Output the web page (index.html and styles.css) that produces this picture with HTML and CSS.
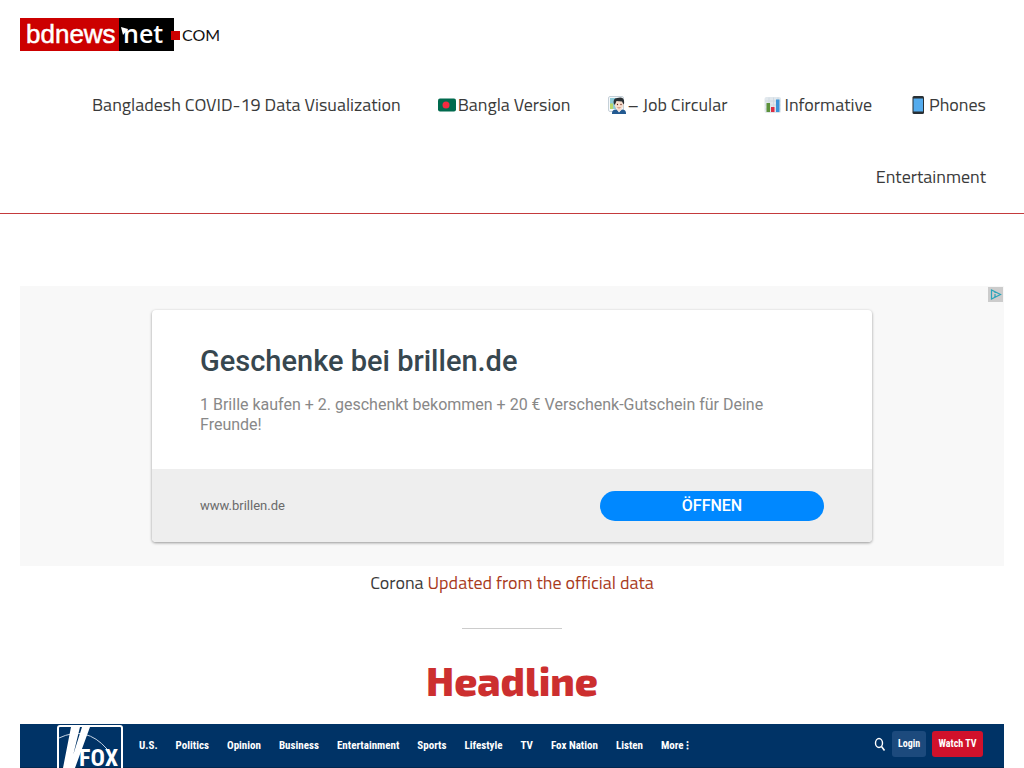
FILE: index.html
```html
<!DOCTYPE html>
<html lang="en">
<head>
<meta charset="utf-8">
<meta name="viewport" content="width=device-width, initial-scale=1">
<title>bdnewsnet.com</title>
<link rel="stylesheet" href="styles.css">
</head>
<body>
<header class="site-header">
  <a class="logo" href="#" aria-label="bdnewsnet.com home">
    <svg width="202" height="33" viewBox="0 0 202 33">
      <path fill="#c00" d="M0 0h99v33H0z"/>
      <path fill="#000" d="M99 0h55v33H99z"/>
      <path fill="#c00" d="M151 13h9v9h-9z"/>
      <path fill="#fff" d="M101 9l7 2-5 6z"/>
      <text class="logo-news" x="6" y="25">bdnews</text>
      <text class="logo-net" x="103" y="25">net</text>
      <text class="logo-com" x="162" y="23">COM</text>
    </svg>
  </a>
  <nav class="main-nav">
    <a href="#">Bangladesh COVID-19 Data Visualization</a>
    <a href="#"><svg class="emoji" viewBox="0 0 36 36"><rect y="5" width="36" height="26" rx="4" fill="#006a4e"/><circle cx="16" cy="18" r="7" fill="#f42a41"/></svg>Bangla Version</a>
    <a href="#"><svg class="emoji" viewBox="0 0 36 36"><rect x="1" y="1" width="30" height="30" rx="3" fill="#f5f8fa" stroke="#c5d0d8" stroke-width="2"/><path fill="#8ccad7" d="M4 4h12v22H4z"/><path fill="#b7d66b" d="M4 15h6v11H4z"/><path fill="#235a91" d="M8 36v-3q1-6 8-6h12q7 0 8 6v3z"/><path fill="#fff" d="M17 26l5 7 6-7z"/><path fill="#f7dece" d="M18 23h9v5l-5 3-4-3z"/><ellipse cx="22" cy="16" rx="9" ry="11" fill="#f7dece"/><path fill="#292f33" d="M12 17Q9 4 18 4q12-4 14 5 1 4-1 8l-3-6-11-1-3 7z"/><circle cx="19" cy="17" r="1.3" fill="#662113"/><circle cx="26" cy="17" r="1.3" fill="#662113"/><path fill="none" stroke="#c1694f" stroke-width="1.5" d="M19 23q3 2 6 0"/></svg>– Job Circular</a>
    <a href="#"><svg class="emoji" viewBox="0 0 36 36"><rect x="1" y="2" width="33" height="32" rx="4" fill="#e1e8ed"/><path stroke="#ccd6dd" stroke-width="1.5" d="M2 10h31M2 18h31M2 26h31M10 3v30M19 3v30M28 3v30"/><path fill="#5c913b" d="M5 14h7v18H5z"/><path fill="#dd2e44" d="M14 22h7v10h-7z"/><path fill="#3b94d9" d="M24 7h7v25h-7z"/></svg>Informative</a>
    <a href="#"><svg class="emoji" viewBox="0 0 36 36"><rect x="7" width="23" height="36" rx="3" fill="#292f33"/><path fill="#55acee" d="M9 5h19v26H9z"/></svg>Phones</a>
    <a href="#">Entertainment</a>
  </nav>
</header>
<main class="content">
  <aside class="ad" aria-label="Advertisement">
    <svg class="ad-mark" width="15" height="15" viewBox="0 0 15 15"><path fill="#ccc" d="M0 0h15v15H0z"/><path fill="none" stroke="#2aa5bb" stroke-width="1.2" d="M3.5 3v9l9-4.500zM7 5v1M7 7v3"/></svg>
    <div class="ad-card">
      <div class="ad-body">
        <h2 class="ad-title">Geschenke bei brillen.de</h2>
        <p class="ad-text">1 Brille kaufen + 2. geschenkt bekommen + 20 € Verschenk-Gutschein für Deine Freunde!</p>
      </div>
      <div class="ad-footer">
        <span class="ad-url">www.brillen.de</span>
        <button class="ad-button" type="button">ÖFFNEN</button>
      </div>
    </div>
  </aside>
  <p class="corona">Corona <a href="#">Updated from the official data</a></p>
  <hr class="divider">
  <h1 class="headline">Headline</h1>
  <section class="fox">
    <svg class="fox-logo" width="66" height="43" viewBox="0 0 66 43"><path fill="none" stroke="#fff" stroke-width="2" d="M1 43V3q0-2 2-2h60q2 0 2 2v40"/><path fill="none" stroke="#c8d5e5" d="M2 13Q29 0 50 24"/><path fill="#fff" d="M14 2h9L13 43H6zM25 2h8L18 43h-6z"/><text class="fox-word" x="22" y="41">FOX</text></svg>
    <nav class="fox-nav">
      <a href="#">U.S.</a><a href="#">Politics</a><a href="#">Opinion</a><a href="#">Business</a><a href="#">Entertainment</a><a href="#">Sports</a><a href="#">Lifestyle</a><a href="#">TV</a><a href="#">Fox Nation</a><a href="#">Listen</a><a href="#">More ⁝</a>
    </nav>
    <div class="fox-actions">
      <svg width="12" height="14" viewBox="0 0 12 14"><ellipse cx="5" cy="6" rx="3.500" ry="4.500" fill="none" stroke="#fff" stroke-width="1.400"/><path stroke="#fff" stroke-width="1.600" d="M7.500 9.500l3 4"/></svg>
      <button class="fox-login" type="button">Login</button>
      <button class="fox-watch" type="button">Watch TV</button>
    </div>
  </section>
</main>
</body>
</html>
```
FILE: styles.css
```css
* { box-sizing: border-box; }
body { margin: 0; background: #fff; color: #3a3a3a; font: 18px/32px "Titillium Web", Roboto, sans-serif; }
a { color: inherit; text-decoration: none; }
button { border: 0; padding: 0; cursor: pointer; }
.site-header { padding: 18px 20px 0; border-bottom: 1px solid #c43a3c; }
.logo { display: block; height: 51px; }
.logo svg { display: block; }
.logo-news { font: 26px "Liberation Sans", sans-serif; fill: #fff; stroke: #fff; stroke-width: 0.5px; }
.logo-net { font: 600 25px "Open Sans", sans-serif; fill: #fff; }
.logo-com { font: 16px Lato, sans-serif; fill: #111; }
.main-nav { display: flex; flex-wrap: wrap; justify-content: flex-end; }
.main-nav a { display: flex; align-items: center; height: 72px; padding: 0 18px 0 19px; gap: 2px; white-space: nowrap; }
.emoji { width: 18px; height: 18px; }
.content { padding: 72px 20px 0; }
.ad { position: relative; padding: 24px 20px; background: #f8f8f8; font-family: Roboto, sans-serif; }
.ad-mark { position: absolute; top: 1px; right: 1px; }
.ad-card { max-width: 720px; margin: 0 auto; background: #fff; border-radius: 4px; overflow: hidden; box-shadow: 0 1px 3px rgba(0, 0, 0, .4); }
.ad-body { padding: 31px 48px 34px; }
.ad-title { margin: 0 0 14px; color: #37474f; font-size: 29px; font-weight: 500; line-height: 40px; }
.ad-text { margin: 0; color: #888; font-size: 16px; line-height: 20px; }
.ad-footer { display: flex; align-items: center; justify-content: space-between; height: 73px; padding: 0 48px; background: #eee; }
.ad-url { color: #6a6a6a; font-size: 13px; }
.ad-button { width: 224px; height: 30px; border-radius: 15px; background: #08f; color: #fff; font: 500 16px/30px Roboto, sans-serif; }
.corona { margin: 0; padding-top: 1px; text-align: center; }
.corona a { color: #a83a1c; }
.divider { width: 100px; height: 1px; margin: 29px auto 0; border: 0; background: #ccc; }
.headline { margin: 27px 0 19px; color: #cc2f2f; font: 800 40px/49px "Exo 2", "Open Sans", sans-serif; text-align: center; }
.fox { display: flex; align-items: flex-start; height: 44px; padding: 1px 21px 0 37px; background: #036; border-bottom: 1px solid #02284f; color: #fff; font: bold 11px/41px "Roboto Condensed", "Liberation Sans", sans-serif; }
.fox-logo { flex: none; }
.fox-word { font: bold 24px "Roboto Condensed", "Liberation Sans", sans-serif; fill: #fff; }
.fox-nav { display: flex; gap: 18px; margin-left: 16px; white-space: nowrap; }
.fox-actions { display: flex; align-items: center; gap: 6px; height: 38px; margin-left: auto; }
.fox-login, .fox-watch { height: 26px; border-radius: 3px; color: #fff; font: bold 10px/26px "Roboto Condensed", "Liberation Sans", sans-serif; }
.fox-login { width: 34px; background: #1c4a7d; }
.fox-watch { width: 51px; background: #d0112b; }
```
